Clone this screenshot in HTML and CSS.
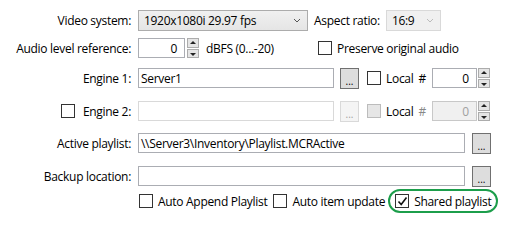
FILE: index.html
```html
<!DOCTYPE html>
<html>
<head>
<meta charset="utf-8">
<link rel="stylesheet" href="styles.css">
</head>
<body>
<div class="form">
  <div class="row r1">
    <label class="lbl">Video system:</label>
    <div class="combo wide"><span>1920x1080i 29.97 fps</span><svg class="chev" width="8" height="5" viewBox="0 0 8 5"><path d="M1 1 L4 4 L7 1" fill="none" stroke="#555" stroke-width="1"/></svg></div>
    <span class="txt ar">Aspect ratio:</span>
    <div class="combo narrow disabled"><span>16:9</span><svg class="chev" width="8" height="5" viewBox="0 0 8 5"><path d="M1 1 L4 4 L7 1" fill="none" stroke="#bbb" stroke-width="1"/></svg></div>
  </div>
  <div class="row r2">
    <label class="lbl">Audio level reference:</label>
    <div class="num n1"><span>0</span></div>
    <div class="spin"><div class="sb up"></div><div class="sb down"></div></div>
    <span class="txt dbfs">dBFS (0...-20)</span>
    <span class="cb"></span><span class="txt">Preserve original audio</span>
  </div>
  <div class="row r3">
    <label class="lbl">Engine 1:</label>
    <div class="tb eng"><span>Server1</span></div>
    <div class="btn">...</div>
    <span class="cb local"></span><span class="txt">Local</span><span class="txt hash">#</span>
    <div class="num n2"><span>0</span></div>
    <div class="spin"><div class="sb up"></div><div class="sb down"></div></div>
  </div>
  <div class="row r4 dis">
    <label class="lbl"><span class="cb ecb"></span>Engine 2:</label>
    <div class="tb eng disabled"></div>
    <div class="btn disabled">...</div>
    <span class="cb local disabled"></span><span class="txt">Local</span><span class="txt hash">#</span>
    <div class="num n2 disabled"><span>0</span></div>
    <div class="spin"><div class="sb up"></div><div class="sb down"></div></div>
  </div>
  <div class="row r5">
    <label class="lbl">Active playlist:</label>
    <div class="tb path"><span>\\Server3\Inventory\Playlist.MCRActive</span></div>
    <div class="btn">...</div>
  </div>
  <div class="row r6">
    <label class="lbl">Backup location:</label>
    <div class="tb path"></div>
    <div class="btn">...</div>
  </div>
  <div class="row r7">
    <span class="cb first"></span><span class="txt aap">Auto Append Playlist</span>
    <span class="cb"></span><span class="txt">Auto item update</span>
    <div class="hl"><span class="cb checked"><svg width="11" height="11" viewBox="0 0 11 11"><path d="M1.5 5.5 L4.2 8.5 L9.5 1.5" fill="none" stroke="#111" stroke-width="1.6"/></svg></span><span class="txt">Shared playlist</span></div>
  </div>
</div>
</body>
</html>
```
FILE: styles.css
```css
html, body {
  margin: 0;
  padding: 0;
  background: #ffffff;
}
body {
  font-family: "Segoe UI", "Open Sans", "Noto Sans", sans-serif;
  font-size: 12px;
  letter-spacing: -0.3px;
  color: #000;
  width: 525px;
  height: 223px;
  overflow: hidden;
}
.form {
  padding-top: 10px;
  display: flex;
  flex-direction: column;
}
.row {
  display: flex;
  align-items: center;
  height: 20px;
}
.r2 { margin-top: 8px; }
.r3 { margin-top: 10px; }
.r4 { margin-top: 13px; }
.r5 { margin-top: 12px; }
.r6 { margin-top: 13px; }
.r7 { margin-top: 3px; height: 24px; }

.lbl {
  box-sizing: border-box;
  width: 138px;
  padding-right: 7px;
  white-space: nowrap;
  display: flex;
  justify-content: flex-end;
  align-items: center;
}
.txt { white-space: nowrap; }

.combo {
  box-sizing: border-box;
  height: 21px;
  border: 1px solid #acacac;
  background: linear-gradient(#f0f0f0, #e5e5e5);
  display: flex;
  align-items: center;
  justify-content: space-between;
  padding: 0 6px 0 5px;
}
.combo.wide { width: 170px; }
.combo.narrow { width: 55px; }
.combo.disabled {
  border-color: #d9d9d9;
  background: #f0f0f0;
}
.chev { margin-top: 1px; }
.ar { margin-left: 6px; margin-right: 6px; }

.num, .tb {
  box-sizing: border-box;
  height: 20px;
  border: 1px solid #abadb3;
  background: #fff;
  display: flex;
  align-items: center;
}
.num { justify-content: flex-end; padding-right: 7px; }
.n1 { width: 47px; }
.n2 { width: 45px; }
.tb { padding-left: 2px; }
.tb.eng { width: 196px; }
.tb.path { width: 327px; }
.tb.disabled {
  border-color: #d9d9d9;
  background: #fff;
}
.num.disabled { background: #f0f0f0; color: #a0a0a0; border-color: #c8c8c8; }

.spin {
  display: flex;
  flex-direction: column;
  gap: 1px;
  margin-left: 1px;
  height: 20px;
}
.sb {
  box-sizing: border-box;
  width: 12px;
  height: 10px;
  background: #e5e5e5;
  border: 1px solid #acacac;
  position: relative;
}
.sb::after {
  content: "";
  position: absolute;
  left: 2px;
  width: 0;
  height: 0;
  border-left: 3px solid transparent;
  border-right: 3px solid transparent;
}
.sb.up::after { top: 2px; border-bottom: 3px solid #222; }
.sb.down::after { top: 3px; border-top: 3px solid #222; }
.r2 .spin { margin-left: 2px; }
.dbfs { width: 112px; margin-left: 7px; }

.btn {
  box-sizing: border-box;
  width: 19px;
  height: 21px;
  margin-left: 6px;
  border: 1px solid #707070;
  background: #dddddd;
  display: flex;
  align-items: flex-end;
  justify-content: center;
  font-size: 10px;
  line-height: 14px;
  letter-spacing: 0;
  color: #000;
}
.r5 .btn, .r6 .btn { margin-left: 7px; }
.btn.disabled {
  border-color: #d9d9d9;
  background: #f4f4f4;
  color: #a0a0a0;
}

.cb {
  box-sizing: border-box;
  width: 14px;
  height: 14px;
  border: 1px solid #333;
  background: #fff;
  margin-right: 5px;
  flex: none;
  display: inline-flex;
  align-items: center;
  justify-content: center;
}
.cb.local { margin-left: 8px; margin-right: 5px; }
.cb.disabled { border-color: #bcbcbc; background: #e6e6e6; }
.hash { margin-left: 5px; margin-right: 6px; }
.ecb { margin-right: 8px; }
.dis .hash { color: #888; }

.first { margin-left: 139px; }
.aap { margin-right: 6px; }

.hl {
  margin-left: 3px;
  box-sizing: border-box;
  height: 24px;
  border: 2px solid #1c9e4b;
  border-radius: 12px;
  display: flex;
  align-items: center;
  padding: 0 5px 0 5px;
}
.hl .cb { margin-right: 5px; }
```
